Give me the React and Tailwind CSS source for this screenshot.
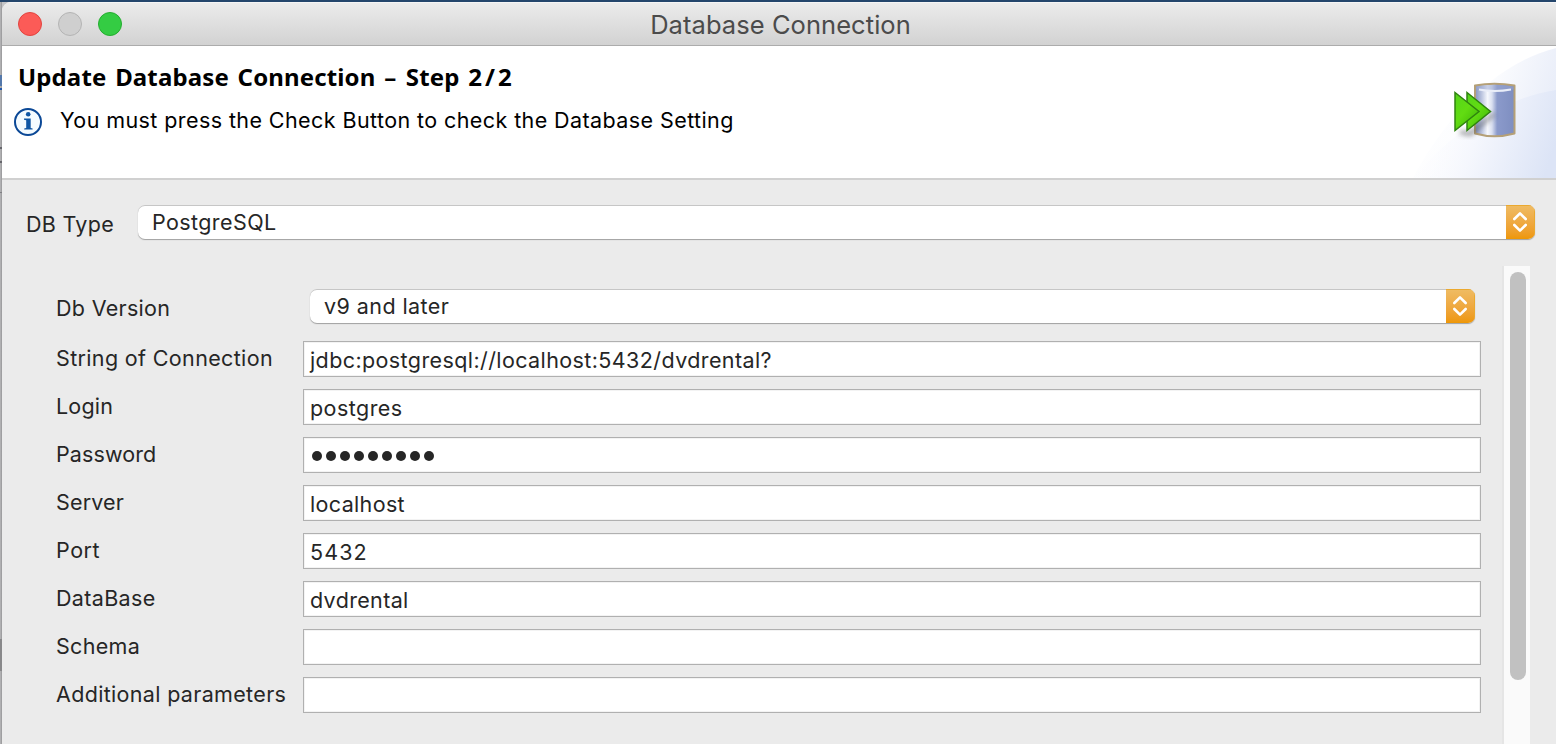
import React from 'react';

function Chevrons() {
  return (
    <span className="flex h-full w-[29px] shrink-0 items-center justify-center bg-gradient-to-b from-[#efbc63] to-[#ee9702] pr-px shadow-[inset_-1px_1px_0_#eba92f]">
      <svg width="16" height="22" viewBox="0 0 16 22" fill="none" stroke="#fff" strokeWidth="2.6" strokeLinecap="round" strokeLinejoin="round">
        <path d="M2.3 8 8 2.3 13.7 8M2.3 14 8 19.7 13.7 14" />
      </svg>
    </span>
  );
}

function Select({ value, className, text }) {
  return (
    <button className={`flex h-[34px] items-center overflow-hidden rounded-[7px] bg-white shadow-[inset_0_1px_0_#c6c6c6,0_1px_1px_#a0a0a0] ${className}`}>
      <span className={`flex-1 whitespace-nowrap text-left ${text}`}>{value}</span>
      <Chevrons />
    </button>
  );
}

const fields = [
  { label: 'String of Connection', lt: 'tracking-[0.35px]', value: 'jdbc:postgresql://localhost:5432/dvdrental?', vt: 'tracking-[0.4px]' },
  { label: 'Login', lt: 'tracking-[0.2px]', value: 'postgres', vt: 'tracking-[0.45px]' },
  { label: 'Password', lt: 'tracking-[0.1px]', dots: 9 },
  { label: 'Server', lt: 'tracking-[0.15px]', value: 'localhost', vt: 'tracking-[0.35px]' },
  { label: 'Port', lt: 'tracking-[0.55px]', value: '5432', vt: 'tracking-[1.1px]' },
  { label: 'DataBase', lt: 'tracking-[0.35px]', value: 'dvdrental', vt: 'tracking-[0.35px]' },
  { label: 'Schema', lt: 'tracking-[0.3px]', value: '', vt: '' },
  { label: 'Additional parameters', lt: 'tracking-[0.33px]', value: '', vt: '' },
];

function Field({ label, lt, value, vt, dots }) {
  return (
    <div className="flex h-9 items-center">
      <span className={`w-[247px] shrink-0 whitespace-nowrap pb-[3px] ${lt}`}>{label}</span>
      <div className="flex h-9 flex-1 items-center border border-[#b0b0b0] bg-white pl-1.5 shadow-[inset_0_0_0_1px_#f3f3f3]">
        {dots ? (
          <span className="flex gap-1 pl-[2px] pt-[2px]">
            {Array.from({ length: dots }, (_, i) => (
              <span key={i} className="size-[10px] rounded-full bg-[#262626]" />
            ))}
          </span>
        ) : (
          <span className={`whitespace-nowrap pt-[1px] ${vt}`}>{value}</span>
        )}
      </div>
    </div>
  );
}

function InfoIcon() {
  return (
    <svg width="28" height="28" viewBox="0 0 28 28" className="shrink-0">
      <circle cx="14" cy="14" r="13" fill="#f4fbff" stroke="#0b4896" strokeWidth="2" />
      <circle cx="14.2" cy="6.3" r="2.3" fill="#0f56a4" />
      <path d="M10 10.500h6.700v9.400l1.900.5v1.200h-8.400v-1.200l2-.5v-7.600l-2.200-.6z" fill="#0f56a4" />
    </svg>
  );
}

function Banner() {
  return (
    <svg width="146" height="132" viewBox="0 0 146 132" className="shrink-0">
      <defs>
        <linearGradient id="bg" x1="0" x2="1" y1="0.3" y2="0.6">
          <stop offset="0" stopColor="#fff" />
          <stop offset="0.5" stopColor="#fbfcfe" />
          <stop offset="1" stopColor="#e6ebf8" />
        </linearGradient>
        <linearGradient id="bg2" x1="0" x2="1" y1="0.4" y2="0.6">
          <stop offset="0" stopColor="#fff" stopOpacity="0" />
          <stop offset="0.45" stopColor="#f5f7fd" />
          <stop offset="1" stopColor="#dce4f6" />
        </linearGradient>
        <linearGradient id="cyl" x1="0" x2="1">
          <stop offset="0" stopColor="#8793bd" />
          <stop offset="0.15" stopColor="#b5bfdc" />
          <stop offset="0.32" stopColor="#f6f8fd" />
          <stop offset="0.43" stopColor="#d9dff0" />
          <stop offset="0.56" stopColor="#8b9acb" />
          <stop offset="1" stopColor="#7e8ec0" />
        </linearGradient>
        <linearGradient id="arr" x1="0" x2="0.8" y1="0" y2="1">
          <stop offset="0" stopColor="#54d51a" />
          <stop offset="0.5" stopColor="#62dc12" />
          <stop offset="1" stopColor="#3fb707" />
        </linearGradient>
        <filter id="blur" x="-30%" y="-30%" width="160%" height="160%"><feGaussianBlur stdDeviation="2.5" /></filter>
      </defs>
      <path d="M3 132C28 85 76 20 146 2V132Z" fill="url(#bg)" />
      <path d="M3 132C40 88 92 52 146 44V132Z" fill="url(#bg2)" />
      <path d="M65 39.500Q84.500 36 104.500 39.500V87.500Q84.500 93 65 87.500Z" fill="url(#cyl)" stroke="#b5a077" strokeWidth="2" strokeLinejoin="round" />
      <path d="M66 40.500Q84.500 37 103.500 40.500V43.500Q84.500 46 66 43.500Z" fill="#98a6d0" opacity=".5" />
      <path d="M69 43.500Q85 46.500 101 43.500" fill="none" stroke="#e9edf8" strokeWidth="2" />
      <path d="M50 86 60 88 84 68" stroke="#444" strokeWidth="4" opacity=".5" fill="none" filter="url(#blur)" />
      <path d="M57 46.500 80.500 65.500 57 84.500Z" fill="url(#arr)" stroke="#2f830f" strokeWidth="1.5" />
      <path d="M45 46.500 69 65.500 45 84.500Z" fill="url(#arr)" stroke="#2f830f" strokeWidth="1.5" />
    </svg>
  );
}

export default function App() {
  return (
    <div className="flex h-[744px] w-[1556px] flex-col overflow-hidden bg-[#2c4a6e] font-['Inter',sans-serif] text-[21.5px] leading-[26px] text-[#262626]">
      <div className="h-[2px] shrink-0 bg-[#24466c]" />
      <div className="flex min-h-0 flex-1 bg-[#c4c4c6]">
        <div className="flex w-[2px] shrink-0 flex-col bg-gradient-to-r from-[#b9b9bb] to-[#969698]">
          <div className="mt-[73px] h-[11px] bg-[#5478aa]" />
          <div className="mt-[2px] h-[2px] bg-[#2458a8]" />
          <div className="mt-[57px] h-[2px] bg-[#66666c]" />
          <div className="mt-[12px] h-[2px] bg-[#66666c]" />
          <div className="mt-[29px] h-[1px] bg-[#808084]" />
          <div className="mt-[446px] h-[32px] bg-[#88888a]" />
        </div>
        <div className="flex min-w-0 flex-1 flex-col overflow-hidden rounded-tl-[9px] bg-[#ebebeb]">
          <header className="grid h-11 shrink-0 grid-cols-[1fr_auto_1fr] items-center border-b border-[#acacac] bg-gradient-to-b from-[#ececec] to-[#d2d2d2] shadow-[inset_0_1px_0_#f5f5f5]">
            <div className="flex gap-4 pl-4">
              <span className="size-6 rounded-full border border-[#e2443f] bg-[#fc5b57]" />
              <span className="size-6 rounded-full border border-[#b4b4b4] bg-[#cfcfcf]" />
              <span className="size-6 rounded-full border border-[#24ad2f] bg-[#34cc43]" />
            </div>
            <h1 className="whitespace-nowrap pl-[3px] pt-[2px] text-[25.5px] tracking-[0.06px] text-[#4b4b4b]">Database Connection</h1>
            <div />
          </header>
          <section className="flex h-[134px] shrink-0 justify-between border-b-2 border-[#d0d0d0] bg-white text-black">
            <div className="flex flex-col">
              <h2 className="mt-[17px] whitespace-nowrap pl-4 font-['Noto_Sans',sans-serif] text-[24px] font-bold leading-7 tracking-[0.13px] [word-spacing:2.4px]">
                Update Database Connection <span className="tracking-[0.8px]">–</span> Step <span className="tracking-[3px]">2/2</span>
              </h2>
              <div className="mt-4 flex items-center pl-3">
                <InfoIcon />
                <p className="whitespace-nowrap pb-[3px] pl-[18px] tracking-[0.41px]">You must press the Check Button to check the Database Setting</p>
              </div>
            </div>
            <Banner />
          </section>
          <div className="flex items-center pl-6 pr-[21px] pt-[25px]">
            <span className="w-[111px] shrink-0 whitespace-nowrap pt-[3px] tracking-[0.3px]">DB Type</span>
            <Select value="PostgreSQL" className="ml-px flex-1" text="pl-[14px] tracking-[0.4px]" />
          </div>
          <div className="mt-[27px] flex min-h-0 flex-1 pl-[54px] pr-[26px]">
            <div className="flex flex-1 flex-col gap-3 pt-[23px]">
              <div className="mb-[6px] flex items-center pr-[6px]">
                <span className="w-[253px] shrink-0 whitespace-nowrap pt-1 tracking-[0.3px]">Db Version</span>
                <Select value="v9 and later" className="ml-px flex-1" text="pl-[14px] tracking-[0.43px]" />
              </div>
              {fields.map((f) => (
                <Field key={f.label} {...f} />
              ))}
            </div>
            <div className="ml-[21px] w-7 shrink-0 border-l-2 border-[#e5e5e5] bg-[#fafafa] pl-[6px] pt-[6px]">
              <div className="h-[408px] w-4 rounded-full bg-[#c1c1c1]" />
            </div>
          </div>
        </div>
      </div>
    </div>
  );
}
